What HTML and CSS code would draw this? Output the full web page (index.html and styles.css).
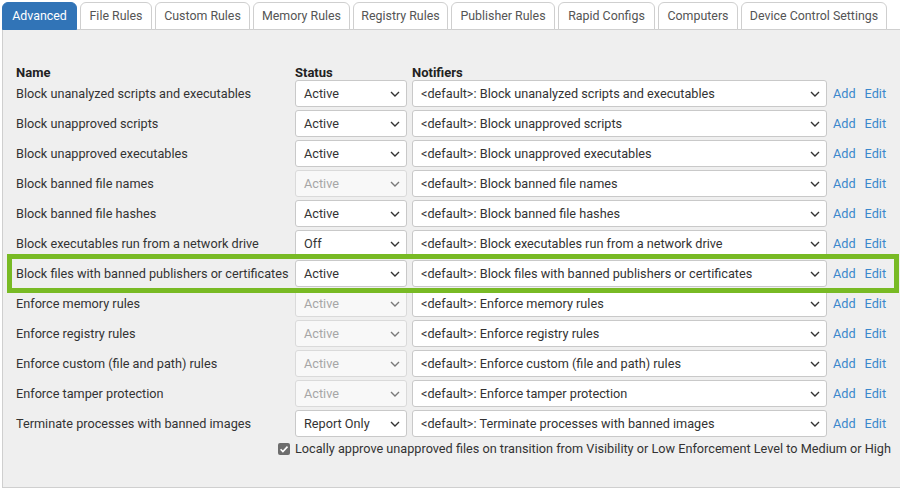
FILE: index.html
```html
<!DOCTYPE html>
<html>
<head>
<meta charset="utf-8">
<link rel="stylesheet" href="styles.css">
</head>
<body>
<div class="page">
  <ul class="tabs">
    <li class="tab active t-adv">Advanced</li>
    <li class="tab t-file">File Rules</li>
    <li class="tab t-custom">Custom Rules</li>
    <li class="tab t-memory">Memory Rules</li>
    <li class="tab t-registry">Registry Rules</li>
    <li class="tab t-publisher">Publisher Rules</li>
    <li class="tab t-rapid">Rapid Configs</li>
    <li class="tab t-computers">Computers</li>
    <li class="tab t-device">Device Control Settings</li>
  </ul>
  <div class="panel">
    <div class="grid">
      <div class="head">Name</div>
      <div class="head">Status</div>
      <div class="head">Notifiers</div>
      <div class="head"></div>

      <div class="name">Block unanalyzed scripts and executables</div>
      <div class="select status"><span>Active</span><svg viewBox="0 0 10 6"><path d="M1 1l4 4 4-4"/></svg></div>
      <div class="select"><span>&lt;default&gt;: Block unanalyzed scripts and executables</span><svg viewBox="0 0 10 6"><path d="M1 1l4 4 4-4"/></svg></div>
      <div class="links"><a>Add</a><a>Edit</a></div>

      <div class="name">Block unapproved scripts</div>
      <div class="select status"><span>Active</span><svg viewBox="0 0 10 6"><path d="M1 1l4 4 4-4"/></svg></div>
      <div class="select"><span>&lt;default&gt;: Block unapproved scripts</span><svg viewBox="0 0 10 6"><path d="M1 1l4 4 4-4"/></svg></div>
      <div class="links"><a>Add</a><a>Edit</a></div>

      <div class="name">Block unapproved executables</div>
      <div class="select status"><span>Active</span><svg viewBox="0 0 10 6"><path d="M1 1l4 4 4-4"/></svg></div>
      <div class="select"><span>&lt;default&gt;: Block unapproved executables</span><svg viewBox="0 0 10 6"><path d="M1 1l4 4 4-4"/></svg></div>
      <div class="links"><a>Add</a><a>Edit</a></div>

      <div class="name">Block banned file names</div>
      <div class="select status disabled"><span>Active</span><svg viewBox="0 0 10 6"><path d="M1 1l4 4 4-4"/></svg></div>
      <div class="select"><span>&lt;default&gt;: Block banned file names</span><svg viewBox="0 0 10 6"><path d="M1 1l4 4 4-4"/></svg></div>
      <div class="links"><a>Add</a><a>Edit</a></div>

      <div class="name">Block banned file hashes</div>
      <div class="select status"><span>Active</span><svg viewBox="0 0 10 6"><path d="M1 1l4 4 4-4"/></svg></div>
      <div class="select"><span>&lt;default&gt;: Block banned file hashes</span><svg viewBox="0 0 10 6"><path d="M1 1l4 4 4-4"/></svg></div>
      <div class="links"><a>Add</a><a>Edit</a></div>

      <div class="name">Block executables run from a network drive</div>
      <div class="select status"><span>Off</span><svg viewBox="0 0 10 6"><path d="M1 1l4 4 4-4"/></svg></div>
      <div class="select"><span>&lt;default&gt;: Block executables run from a network drive</span><svg viewBox="0 0 10 6"><path d="M1 1l4 4 4-4"/></svg></div>
      <div class="links"><a>Add</a><a>Edit</a></div>

      <div class="name highlighted">Block files with banned publishers or certificates<div class="highlight"></div></div>
      <div class="select status"><span>Active</span><svg viewBox="0 0 10 6"><path d="M1 1l4 4 4-4"/></svg></div>
      <div class="select"><span>&lt;default&gt;: Block files with banned publishers or certificates</span><svg viewBox="0 0 10 6"><path d="M1 1l4 4 4-4"/></svg></div>
      <div class="links"><a>Add</a><a>Edit</a></div>

      <div class="name">Enforce memory rules</div>
      <div class="select status disabled"><span>Active</span><svg viewBox="0 0 10 6"><path d="M1 1l4 4 4-4"/></svg></div>
      <div class="select"><span>&lt;default&gt;: Enforce memory rules</span><svg viewBox="0 0 10 6"><path d="M1 1l4 4 4-4"/></svg></div>
      <div class="links"><a>Add</a><a>Edit</a></div>

      <div class="name">Enforce registry rules</div>
      <div class="select status disabled"><span>Active</span><svg viewBox="0 0 10 6"><path d="M1 1l4 4 4-4"/></svg></div>
      <div class="select"><span>&lt;default&gt;: Enforce registry rules</span><svg viewBox="0 0 10 6"><path d="M1 1l4 4 4-4"/></svg></div>
      <div class="links"><a>Add</a><a>Edit</a></div>

      <div class="name">Enforce custom (file and path) rules</div>
      <div class="select status disabled"><span>Active</span><svg viewBox="0 0 10 6"><path d="M1 1l4 4 4-4"/></svg></div>
      <div class="select"><span>&lt;default&gt;: Enforce custom (file and path) rules</span><svg viewBox="0 0 10 6"><path d="M1 1l4 4 4-4"/></svg></div>
      <div class="links"><a>Add</a><a>Edit</a></div>

      <div class="name">Enforce tamper protection</div>
      <div class="select status disabled"><span>Active</span><svg viewBox="0 0 10 6"><path d="M1 1l4 4 4-4"/></svg></div>
      <div class="select"><span>&lt;default&gt;: Enforce tamper protection</span><svg viewBox="0 0 10 6"><path d="M1 1l4 4 4-4"/></svg></div>
      <div class="links"><a>Add</a><a>Edit</a></div>

      <div class="name">Terminate processes with banned images</div>
      <div class="select status"><span>Report Only</span><svg viewBox="0 0 10 6"><path d="M1 1l4 4 4-4"/></svg></div>
      <div class="select"><span>&lt;default&gt;: Terminate processes with banned images</span><svg viewBox="0 0 10 6"><path d="M1 1l4 4 4-4"/></svg></div>
      <div class="links"><a>Add</a><a>Edit</a></div>

      <div class="check-cell"><span class="checkbox"><svg viewBox="0 0 12 12"><path d="M2.6 6.2l2.3 2.4 4.6-5"/></svg></span></div>
      <div class="check-label">Locally approve unapproved files on transition from Visibility or Low Enforcement Level to Medium or High</div>
    </div>
  </div>
</div>
</body>
</html>
```

FILE: styles.css
```css
* { box-sizing: border-box; }
html, body { margin: 0; padding: 0; overflow: hidden; }
body {
  background: #ffffff;
  font-family: Roboto, "Liberation Sans", Arial, sans-serif;
  font-size: 12.7px;
  color: #333333;
}
.page {
  padding: 2px 0 0 2px;
  width: 910px;
}
.tabs {
  list-style: none;
  margin: 0;
  padding: 0;
  display: flex;
  gap: 3px;
  position: relative;
  z-index: 1;
}
.tab {
  height: 28px;
  padding: 0;
  line-height: 26px;
  text-align: center;
  flex: none;
  border: 1px solid #cfcfcf;
  border-radius: 6px 6px 0 0;
  background: #ffffff;
  color: #555555;
  white-space: nowrap;
  font-size: 12.4px;
}
.t-adv { width: 75px; }
.t-file { width: 72px; }
.t-custom { width: 95px; }
.t-memory { width: 97px; }
.t-registry { width: 95px; }
.t-publisher { width: 104px; }
.t-rapid { width: 97px; }
.t-computers { width: 80px; }
.t-device { width: 146px; }
.tab.active {
  background: #3174b7;
  border-color: #3174b7;
  color: #ffffff;
}
.panel {
  margin-top: -1px;
  border: 1px solid #cfcfcf;
  border-right: none;
  background: #efefef;
  height: 459px;
  padding: 35px 0 0 13px;
}
.grid {
  display: grid;
  grid-template-columns: 274px 112px 415px auto;
  column-gap: 5px;
  grid-template-rows: 15px;
  grid-auto-rows: 30px;
  align-items: start;
}
.grid > div { min-width: 0; }
.head {
  font-weight: bold;
  font-size: 13px;
  line-height: 15px;
  color: #222222;
}
.name {
  height: 27px;
  line-height: 27px;
  white-space: nowrap;
  color: #333333;
}
.highlighted { position: relative; }
.highlight {
  position: absolute;
  left: -9px;
  top: -6px;
  width: 892px;
  height: 39px;
  border: 5px solid #78ba24;
  pointer-events: none;
}
.select {
  height: 27px;
  display: flex;
  align-items: center;
  justify-content: space-between;
  padding: 0 6px 0 8px;
  background: #ffffff;
  border: 1px solid #c9c9c9;
  border-radius: 3px;
  color: #333333;
  white-space: nowrap;
}
.select svg {
  width: 10px;
  height: 6px;
  flex: none;
}
.select svg path {
  fill: none;
  stroke: #333333;
  stroke-width: 1.4;
}
.select.disabled {
  background: #f8f8f8;
  border-color: #dadada;
  color: #a6a6a6;
}
.select.disabled svg path { stroke: #7a7a7a; }
.links {
  height: 27px;
  display: flex;
  align-items: center;
  gap: 9px;
  margin-left: 1px;
}
.links a {
  color: #3a88cc;
  text-decoration: none;
}
.check-cell {
  display: flex;
  justify-content: flex-end;
  align-items: center;
  height: 18px;
}
.checkbox {
  width: 12px;
  height: 12px;
  border-radius: 2px;
  background: #6d6d6d;
  display: flex;
}
.checkbox svg { width: 12px; height: 12px; }
.checkbox path { fill: none; stroke: #ffffff; stroke-width: 1.6; }
.check-label {
  grid-column: 2 / 5;
  height: 18px;
  line-height: 18px;
  white-space: nowrap;
  color: #333333;
}
```
